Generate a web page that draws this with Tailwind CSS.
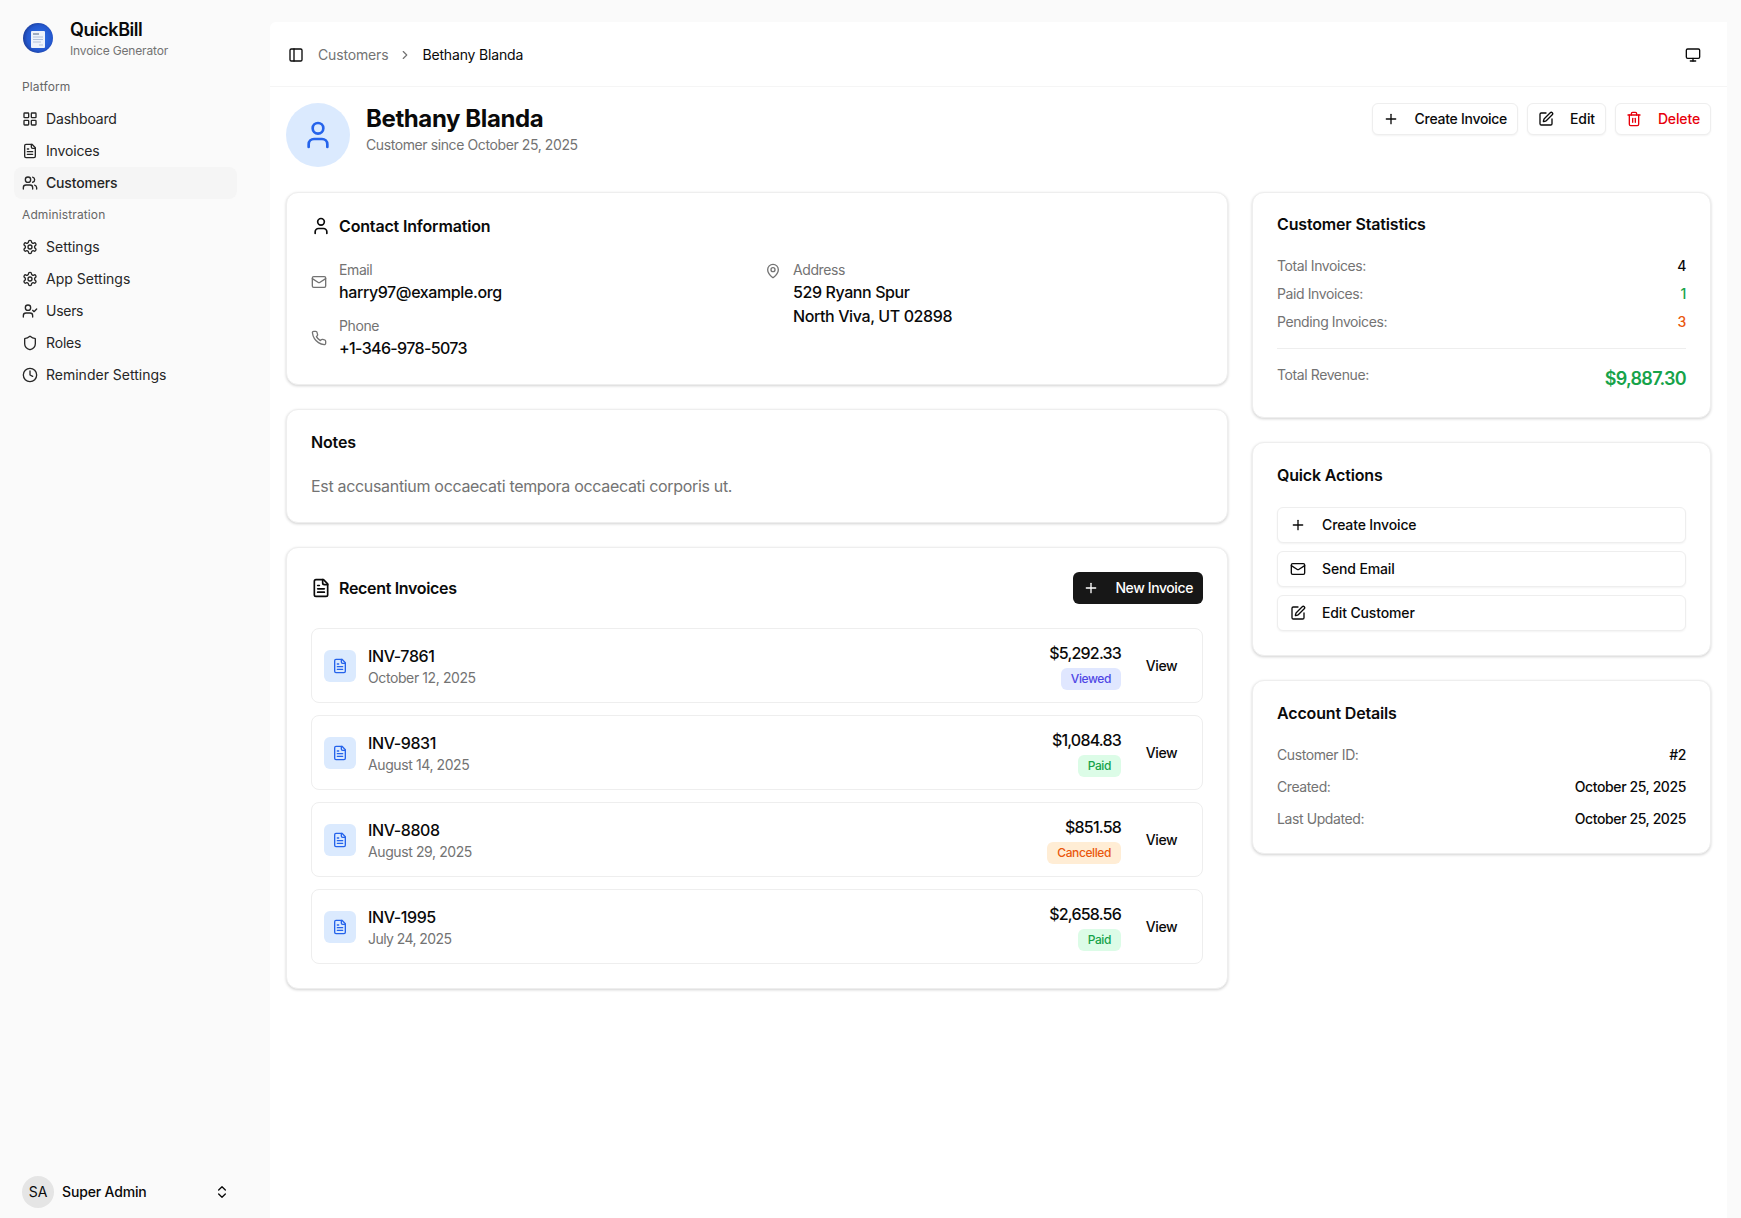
<!DOCTYPE html>
<html lang="en">
<head>
  <meta charset="UTF-8" />
  <title>Bethany Blanda - QuickBill</title>
  <meta name="viewport" content="width=device-width, initial-scale=1.0" />
  <script src="https://cdn.jsdelivr.net/npm/@tailwindcss/browser@4"></script>
</head>
<body class="bg-[#fafafa] text-[#0a0a0a] font-[Inter,sans-serif] tracking-[-0.025em]">

<!-- Icon sprite -->
<svg class="hidden" xmlns="http://www.w3.org/2000/svg">
  <symbol id="i-grid" viewBox="0 0 24 24"><rect x="3" y="3" width="7" height="7" rx="1"/><rect x="14" y="3" width="7" height="7" rx="1"/><rect x="14" y="14" width="7" height="7" rx="1"/><rect x="3" y="14" width="7" height="7" rx="1"/></symbol>
  <symbol id="i-file" viewBox="0 0 24 24"><path d="M15 2H6a2 2 0 0 0-2 2v16a2 2 0 0 0 2 2h12a2 2 0 0 0 2-2V7Z"/><path d="M14 2v4a2 2 0 0 0 2 2h4"/><path d="M10 9H8"/><path d="M16 13H8"/><path d="M16 17H8"/></symbol>
  <symbol id="i-users" viewBox="0 0 24 24"><path d="M16 21v-2a4 4 0 0 0-4-4H6a4 4 0 0 0-4 4v2"/><circle cx="9" cy="7" r="4"/><path d="M22 21v-2a4 4 0 0 0-3-3.87"/><path d="M16 3.13a4 4 0 0 1 0 7.75"/></symbol>
  <symbol id="i-gear" viewBox="0 0 24 24"><path d="M12.22 2h-.44a2 2 0 0 0-2 2v.18a2 2 0 0 1-1 1.73l-.43.25a2 2 0 0 1-2 0l-.15-.08a2 2 0 0 0-2.73.73l-.22.38a2 2 0 0 0 .73 2.73l.15.1a2 2 0 0 1 1 1.72v.51a2 2 0 0 1-1 1.74l-.15.09a2 2 0 0 0-.73 2.73l.22.38a2 2 0 0 0 2.73.73l.15-.08a2 2 0 0 1 2 0l.43.25a2 2 0 0 1 1 1.73V20a2 2 0 0 0 2 2h.44a2 2 0 0 0 2-2v-.18a2 2 0 0 1 1-1.73l.43-.25a2 2 0 0 1 2 0l.15.08a2 2 0 0 0 2.73-.73l.22-.39a2 2 0 0 0-.73-2.73l-.15-.08a2 2 0 0 1-1-1.74v-.5a2 2 0 0 1 1-1.74l.15-.09a2 2 0 0 0 .73-2.73l-.22-.38a2 2 0 0 0-2.73-.73l-.15.08a2 2 0 0 1-2 0l-.43-.25a2 2 0 0 1-1-1.73V4a2 2 0 0 0-2-2z"/><circle cx="12" cy="12" r="3"/></symbol>
  <symbol id="i-usercheck" viewBox="0 0 24 24"><path d="M16 21v-2a4 4 0 0 0-4-4H6a4 4 0 0 0-4 4v2"/><circle cx="9" cy="7" r="4"/><polyline points="16 11 18 13 22 9"/></symbol>
  <symbol id="i-shield" viewBox="0 0 24 24"><path d="M20 13c0 5-3.5 7.5-7.66 8.95a1 1 0 0 1-.67-.01C7.5 20.5 4 18 4 13V6a1 1 0 0 1 1-1c2 0 4.5-1.2 6.24-2.72a1.17 1.17 0 0 1 1.52 0C14.51 3.81 17 5 19 5a1 1 0 0 1 1 1z"/></symbol>
  <symbol id="i-clock" viewBox="0 0 24 24"><circle cx="12" cy="12" r="10"/><polyline points="12 6 12 12 16 14"/></symbol>
  <symbol id="i-panel" viewBox="0 0 24 24"><rect x="3" y="3" width="18" height="18" rx="2"/><path d="M9 3v18"/></symbol>
  <symbol id="i-chevron" viewBox="0 0 24 24"><path d="m9 18 6-6-6-6"/></symbol>
  <symbol id="i-monitor" viewBox="0 0 24 24"><rect x="2" y="3" width="20" height="14" rx="2"/><line x1="8" y1="21" x2="16" y2="21"/><line x1="12" y1="17" x2="12" y2="21"/></symbol>
  <symbol id="i-user" viewBox="0 0 24 24"><path d="M19 21v-2a4 4 0 0 0-4-4H9a4 4 0 0 0-4 4v2"/><circle cx="12" cy="7" r="4"/></symbol>
  <symbol id="i-plus" viewBox="0 0 24 24"><path d="M5 12h14"/><path d="M12 5v14"/></symbol>
  <symbol id="i-pen" viewBox="0 0 24 24"><path d="M12 3H5a2 2 0 0 0-2 2v14a2 2 0 0 0 2 2h14a2 2 0 0 0 2-2v-7"/><path d="M18.375 2.625a1 1 0 0 1 3 3l-9.013 9.014a2 2 0 0 1-.853.505l-2.873.84a.5.5 0 0 1-.62-.62l.84-2.873a2 2 0 0 1 .506-.852z"/></symbol>
  <symbol id="i-trash" viewBox="0 0 24 24"><path d="M3 6h18"/><path d="M19 6v14c0 1-1 2-2 2H7c-1 0-2-1-2-2V6"/><path d="M8 6V4c0-1 1-2 2-2h4c1 0 2 1 2 2v2"/><line x1="10" y1="11" x2="10" y2="17"/><line x1="14" y1="11" x2="14" y2="17"/></symbol>
  <symbol id="i-mail" viewBox="0 0 24 24"><rect x="2" y="4" width="20" height="16" rx="2"/><path d="m22 7-8.97 5.7a1.94 1.94 0 0 1-2.06 0L2 7"/></symbol>
  <symbol id="i-phone" viewBox="0 0 24 24"><path d="M22 16.92v3a2 2 0 0 1-2.18 2 19.79 19.79 0 0 1-8.63-3.07 19.5 19.5 0 0 1-6-6 19.79 19.79 0 0 1-3.07-8.67A2 2 0 0 1 4.11 2h3a2 2 0 0 1 2 1.72 12.84 12.84 0 0 0 .7 2.81 2 2 0 0 1-.45 2.11L8.09 9.91a16 16 0 0 0 6 6l1.27-1.27a2 2 0 0 1 2.11-.45 12.84 12.84 0 0 0 2.81.7A2 2 0 0 1 22 16.92z"/></symbol>
  <symbol id="i-pin" viewBox="0 0 24 24"><path d="M20 10c0 4.993-5.539 10.193-7.399 11.799a1 1 0 0 1-1.202 0C9.539 20.193 4 14.993 4 10a8 8 0 0 1 16 0"/><circle cx="12" cy="10" r="3"/></symbol>
  <symbol id="i-updown" viewBox="0 0 24 24"><path d="m7 15 5 5 5-5"/><path d="m7 9 5-5 5 5"/></symbol>
</svg>

<div class="flex h-screen overflow-hidden">

  <!-- Sidebar -->
  <aside class="w-[270px] shrink-0 flex flex-col justify-between tracking-[-0.01em]">
    <div>
      <div class="h-[71px] flex items-start gap-[17px] pl-[23px] pt-[18px]">
        <svg class="size-[30px] shrink-0 mt-[5px]" viewBox="0 0 30 30">
          <defs><radialGradient id="logo-bg" cx="55%" cy="50%" r="55%"><stop offset="0" stop-color="#2f74e6"/><stop offset=".75" stop-color="#2458cf"/><stop offset="1" stop-color="#1c3f9e"/></radialGradient></defs>
          <circle cx="15" cy="15" r="15" fill="url(#logo-bg)"/>
          <rect x="8" y="8" width="14" height="17" rx="1" fill="#eef3fb"/>
          <path d="M10 11h6" stroke="#6b7c99" stroke-width="1.2" fill="none"/>
          <path d="M10 14h10M10 16.5h10M10 19h8M16 22h4" stroke="#b3c2da" stroke-width="1" fill="none"/>
        </svg>
        <div>
          <div class="text-[18px] leading-6 font-semibold tracking-[-0.025em]">QuickBill</div>
          <div class="text-xs leading-4 mt-[1px] text-[#737373]">Invoice Generator</div>
        </div>
      </div>

      <div class="h-8 flex items-center pl-[22px] text-xs text-[#666] tracking-[0.01em]">Platform</div>
      <nav class="mr-[33px] ml-[14px] text-sm text-[#262626]">
        <a class="h-8 flex items-center gap-2 px-2"><svg class="size-4 fill-none stroke-current stroke-2 [stroke-linecap:round] [stroke-linejoin:round]"><use href="#i-grid"/></svg>Dashboard</a>
        <a class="h-8 flex items-center gap-2 px-2"><svg class="size-4 fill-none stroke-current stroke-2 [stroke-linecap:round] [stroke-linejoin:round]"><use href="#i-file"/></svg>Invoices</a>
        <a class="h-8 flex items-center gap-2 px-2 rounded-lg bg-[#f5f5f5] font-medium"><svg class="size-4 fill-none stroke-current stroke-2 [stroke-linecap:round] [stroke-linejoin:round]"><use href="#i-users"/></svg>Customers</a>
      </nav>

      <div class="h-8 flex items-center pl-[22px] text-xs text-[#666] tracking-[0.01em]">Administration</div>
      <nav class="mr-[33px] ml-[14px] text-sm text-[#262626]">
        <a class="h-8 flex items-center gap-2 px-2 tracking-normal"><svg class="size-4 fill-none stroke-current stroke-2 [stroke-linecap:round] [stroke-linejoin:round]"><use href="#i-gear"/></svg>Settings</a>
        <a class="h-8 flex items-center gap-2 px-2 tracking-normal"><svg class="size-4 fill-none stroke-current stroke-2 [stroke-linecap:round] [stroke-linejoin:round]"><use href="#i-gear"/></svg>App Settings</a>
        <a class="h-8 flex items-center gap-2 px-2 tracking-[-0.02em]"><svg class="size-4 fill-none stroke-current stroke-2 [stroke-linecap:round] [stroke-linejoin:round]"><use href="#i-usercheck"/></svg>Users</a>
        <a class="h-8 flex items-center gap-2 px-2"><svg class="size-4 fill-none stroke-current stroke-2 [stroke-linecap:round] [stroke-linejoin:round]"><use href="#i-shield"/></svg>Roles</a>
        <a class="h-8 flex items-center gap-2 px-2 tracking-normal"><svg class="size-4 fill-none stroke-current stroke-2 [stroke-linecap:round] [stroke-linejoin:round]"><use href="#i-clock"/></svg>Reminder Settings</a>
      </nav>
    </div>

    <!-- User menu -->
    <div class="flex items-center pl-[22px] pr-[40px] pb-[10px]">
      <div class="size-8 rounded-full bg-[#e5e5e5] flex items-center justify-center text-sm tracking-normal">SA</div>
      <span class="ml-2 text-sm font-medium">Super Admin</span>
      <svg class="size-4 ml-auto fill-none stroke-current stroke-2 [stroke-linecap:round] [stroke-linejoin:round]"><use href="#i-updown"/></svg>
    </div>
  </aside>

  <!-- Main panel -->
  <main class="flex-1 mt-[22px] mr-[14px] bg-white rounded-tl-md">
    <header class="h-[65px] pt-[2px] border-b border-[#f5f5f5] flex items-center pl-[18px] pr-[26px] tracking-[-0.01em]">
      <svg class="size-4 fill-none stroke-current stroke-2 [stroke-linecap:round] [stroke-linejoin:round]"><use href="#i-panel"/></svg>
      <span class="ml-[14px] text-sm text-[#737373]">Customers</span>
      <svg class="size-3.5 mx-[10px] text-[#737373] fill-none stroke-current stroke-2 [stroke-linecap:round] [stroke-linejoin:round]"><use href="#i-chevron"/></svg>
      <span class="text-sm">Bethany Blanda</span>
      <svg class="size-4 ml-auto fill-none stroke-current stroke-2 [stroke-linecap:round] [stroke-linejoin:round]"><use href="#i-monitor"/></svg>
    </header>

    <div class="p-4">
      <!-- Page heading -->
      <div class="flex items-start justify-between mb-[25px]">
        <div class="flex items-start gap-4">
          <div class="size-16 rounded-full bg-[#dbeafe] flex items-center justify-center">
            <svg class="size-8 text-[#2563eb] fill-none stroke-current stroke-2 [stroke-linecap:round] [stroke-linejoin:round]"><use href="#i-user"/></svg>
          </div>
          <div>
            <h1 class="text-2xl leading-8 font-bold">Bethany Blanda</h1>
            <p class="text-sm leading-5 text-[#737373]">Customer since October 25, 2025</p>
          </div>
        </div>
        <div class="flex gap-[9px] text-sm font-medium tracking-[-0.01em]">
          <button class="h-8 px-2.5 flex items-center gap-4 rounded-md border border-[#eee] bg-white shadow-xs tracking-[-0.02em]"><svg class="size-4 fill-none stroke-current stroke-2 [stroke-linecap:round] [stroke-linejoin:round]"><use href="#i-plus"/></svg>Create Invoice</button>
          <button class="h-8 px-2.5 flex items-center gap-4 rounded-md border border-[#eee] bg-white shadow-xs"><svg class="size-4 fill-none stroke-current stroke-2 [stroke-linecap:round] [stroke-linejoin:round]"><use href="#i-pen"/></svg>Edit</button>
          <button class="h-8 px-2.5 flex items-center gap-4 rounded-md border border-[#eee] bg-white shadow-xs text-[#e7000b]"><svg class="size-4 fill-none stroke-current stroke-2 [stroke-linecap:round] [stroke-linejoin:round]"><use href="#i-trash"/></svg>Delete</button>
        </div>
      </div>

      <div class="grid grid-cols-3 gap-6 items-start">

        <!-- Left column -->
        <div class="col-span-2 flex flex-col gap-6">

          <section class="rounded-xl border border-[#eee] bg-white shadow-[0_1px_3px_rgba(0,0,0,.18)] px-6 pt-[21px] pb-6">
            <h2 class="flex items-center gap-2 text-base leading-6 font-semibold tracking-[-0.01em]">
              <svg class="size-5 fill-none stroke-current stroke-2 [stroke-linecap:round] [stroke-linejoin:round]"><use href="#i-user"/></svg>
              Contact Information
            </h2>
            <div class="grid grid-cols-2 gap-x-4 mt-[22px]">
              <div class="flex flex-col gap-3">
                <div class="flex items-center gap-3">
                  <svg class="size-4 text-[#737373] fill-none stroke-current stroke-2 [stroke-linecap:round] [stroke-linejoin:round]"><use href="#i-mail"/></svg>
                  <div><p class="text-sm leading-5 text-[#737373]">Email</p><p class="text-base leading-6 font-medium">harry97@example.org</p></div>
                </div>
                <div class="flex items-center gap-3">
                  <svg class="size-4 text-[#737373] fill-none stroke-current stroke-2 [stroke-linecap:round] [stroke-linejoin:round]"><use href="#i-phone"/></svg>
                  <div><p class="text-sm leading-5 text-[#737373]">Phone</p><p class="text-base leading-6 font-medium tracking-[-0.04em]">+1-346-978-5073</p></div>
                </div>
              </div>
              <div class="flex items-start gap-3">
                <svg class="size-4 mt-[3px] text-[#737373] fill-none stroke-current stroke-2 [stroke-linecap:round] [stroke-linejoin:round]"><use href="#i-pin"/></svg>
                <div><p class="text-sm leading-5 text-[#737373]">Address</p><p class="text-base leading-6 font-medium">529 Ryann Spur</p><p class="text-base leading-6 font-medium">North Viva, UT 02898</p></div>
              </div>
            </div>
          </section>

          <section class="rounded-xl border border-[#eee] bg-white shadow-[0_1px_3px_rgba(0,0,0,.18)] px-6 pt-5 pb-6">
            <h2 class="text-base leading-6 font-semibold tracking-[-0.01em]">Notes</h2>
            <p class="mt-5 text-base leading-6 text-[#737373] tracking-[-0.02em]">Est accusantium occaecati tempora occaecati corporis ut.</p>
          </section>

          <section class="rounded-xl border border-[#eee] bg-white shadow-[0_1px_3px_rgba(0,0,0,.18)] p-6">
            <div class="flex items-center justify-between">
              <h2 class="flex items-center gap-2 text-base leading-6 font-semibold tracking-[-0.02em]">
                <svg class="size-5 fill-none stroke-current stroke-2 [stroke-linecap:round] [stroke-linejoin:round]"><use href="#i-file"/></svg>
                Recent Invoices
              </h2>
              <button class="h-8 px-2.5 flex items-center gap-4 rounded-md bg-[#171717] text-white text-sm font-medium"><svg class="size-4 fill-none stroke-current stroke-2 [stroke-linecap:round] [stroke-linejoin:round]"><use href="#i-plus"/></svg>New Invoice</button>
            </div>

            <div class="mt-6 flex flex-col gap-3">
              <div class="h-[75px] rounded-lg border border-[#eee] flex items-center pl-3 pr-3">
                <div class="size-8 rounded-md bg-[#dbeafe] flex items-center justify-center"><svg class="size-4 text-[#2563eb] fill-none stroke-current stroke-2 [stroke-linecap:round] [stroke-linejoin:round]"><use href="#i-file"/></svg></div>
                <div class="ml-3"><p class="text-base leading-6 font-medium">INV-7861</p><p class="text-sm leading-5 text-[#737373]">October 12, 2025</p></div>
                <div class="ml-auto flex flex-col items-end gap-[3px]"><p class="text-base leading-6 font-medium tracking-[-0.05em]">$5,292.33</p><span class="h-[22px] px-2.5 flex items-center rounded-md bg-[#e0e7ff] text-[#4f46e5] text-xs font-medium">Viewed</span></div>
                <button class="w-[57px] ml-3 h-8 text-sm font-medium">View</button>
              </div>
              <div class="h-[75px] rounded-lg border border-[#eee] flex items-center pl-3 pr-3">
                <div class="size-8 rounded-md bg-[#dbeafe] flex items-center justify-center"><svg class="size-4 text-[#2563eb] fill-none stroke-current stroke-2 [stroke-linecap:round] [stroke-linejoin:round]"><use href="#i-file"/></svg></div>
                <div class="ml-3"><p class="text-base leading-6 font-medium">INV-9831</p><p class="text-sm leading-5 text-[#737373]">August 14, 2025</p></div>
                <div class="ml-auto flex flex-col items-end gap-[3px]"><p class="text-base leading-6 font-medium tracking-[-0.05em]">$1,084.83</p><span class="h-[22px] px-2.5 flex items-center rounded-md bg-[#dcfce7] text-[#16a34a] text-xs font-medium">Paid</span></div>
                <button class="w-[57px] ml-3 h-8 text-sm font-medium">View</button>
              </div>
              <div class="h-[75px] rounded-lg border border-[#eee] flex items-center pl-3 pr-3">
                <div class="size-8 rounded-md bg-[#dbeafe] flex items-center justify-center"><svg class="size-4 text-[#2563eb] fill-none stroke-current stroke-2 [stroke-linecap:round] [stroke-linejoin:round]"><use href="#i-file"/></svg></div>
                <div class="ml-3"><p class="text-base leading-6 font-medium">INV-8808</p><p class="text-sm leading-5 text-[#737373]">August 29, 2025</p></div>
                <div class="ml-auto flex flex-col items-end gap-[3px]"><p class="text-base leading-6 font-medium tracking-[-0.05em]">$851.58</p><span class="h-[22px] px-2.5 flex items-center rounded-md bg-[#ffedd5] text-[#ea580c] text-xs font-medium">Cancelled</span></div>
                <button class="w-[57px] ml-3 h-8 text-sm font-medium">View</button>
              </div>
              <div class="h-[75px] rounded-lg border border-[#eee] flex items-center pl-3 pr-3">
                <div class="size-8 rounded-md bg-[#dbeafe] flex items-center justify-center"><svg class="size-4 text-[#2563eb] fill-none stroke-current stroke-2 [stroke-linecap:round] [stroke-linejoin:round]"><use href="#i-file"/></svg></div>
                <div class="ml-3"><p class="text-base leading-6 font-medium">INV-1995</p><p class="text-sm leading-5 text-[#737373] tracking-[-0.04em]">July 24, 2025</p></div>
                <div class="ml-auto flex flex-col items-end gap-[3px]"><p class="text-base leading-6 font-medium tracking-[-0.05em]">$2,658.56</p><span class="h-[22px] px-2.5 flex items-center rounded-md bg-[#dcfce7] text-[#16a34a] text-xs font-medium">Paid</span></div>
                <button class="w-[57px] ml-3 h-8 text-sm font-medium">View</button>
              </div>
            </div>
          </section>
        </div>

        <!-- Right column -->
        <div class="flex flex-col gap-6">

          <section class="rounded-xl border border-[#eee] bg-white shadow-[0_1px_3px_rgba(0,0,0,.18)] px-6 pt-[19px] pb-6">
            <h2 class="text-base leading-6 font-semibold tracking-[-0.01em]">Customer Statistics</h2>
            <div class="mt-5 flex flex-col gap-2 text-sm leading-5">
              <div class="flex justify-between"><span class="text-[#737373]">Total Invoices:</span><span class="font-medium">4</span></div>
              <div class="flex justify-between"><span class="text-[#737373]">Paid Invoices:</span><span class="font-medium text-[#16a34a]">1</span></div>
              <div class="flex justify-between"><span class="text-[#737373]">Pending Invoices:</span><span class="font-medium text-[#ea580c]">3</span></div>
            </div>
            <div class="mt-4 pt-4 border-t border-[#eee] flex justify-between items-start">
              <span class="text-sm leading-5 text-[#737373]">Total Revenue:</span>
              <span class="text-lg leading-7 font-semibold text-[#16a34a] tracking-[-0.04em]">$9,887.30</span>
            </div>
          </section>

          <section class="rounded-xl border border-[#eee] bg-white shadow-[0_1px_3px_rgba(0,0,0,.18)] px-6 pt-5 pb-6">
            <h2 class="text-base leading-6 font-semibold tracking-[-0.01em]">Quick Actions</h2>
            <div class="mt-5 flex flex-col gap-2 text-sm font-medium tracking-[-0.01em]">
              <button class="h-9 px-3 flex items-center gap-4 rounded-md border border-[#eee] bg-white shadow-xs"><svg class="size-4 fill-none stroke-current stroke-2 [stroke-linecap:round] [stroke-linejoin:round]"><use href="#i-plus"/></svg>Create Invoice</button>
              <button class="h-9 px-3 flex items-center gap-4 rounded-md border border-[#eee] bg-white shadow-xs"><svg class="size-4 fill-none stroke-current stroke-2 [stroke-linecap:round] [stroke-linejoin:round]"><use href="#i-mail"/></svg>Send Email</button>
              <button class="h-9 px-3 flex items-center gap-4 rounded-md border border-[#eee] bg-white shadow-xs"><svg class="size-4 fill-none stroke-current stroke-2 [stroke-linecap:round] [stroke-linejoin:round]"><use href="#i-pen"/></svg>Edit Customer</button>
            </div>
          </section>

          <section class="rounded-xl border border-[#eee] bg-white shadow-[0_1px_3px_rgba(0,0,0,.18)] px-6 pt-5 pb-6">
            <h2 class="text-base leading-6 font-semibold tracking-[-0.01em]">Account Details</h2>
            <div class="mt-5 flex flex-col gap-3 text-sm leading-5">
              <div class="flex justify-between"><span class="text-[#737373]">Customer ID:</span><span class="font-medium">#2</span></div>
              <div class="flex justify-between"><span class="text-[#737373]">Created:</span><span class="font-medium">October 25, 2025</span></div>
              <div class="flex justify-between"><span class="text-[#737373]">Last Updated:</span><span class="font-medium">October 25, 2025</span></div>
            </div>
          </section>
        </div>
      </div>
    </div>
  </main>
</div>

</body>
</html>
